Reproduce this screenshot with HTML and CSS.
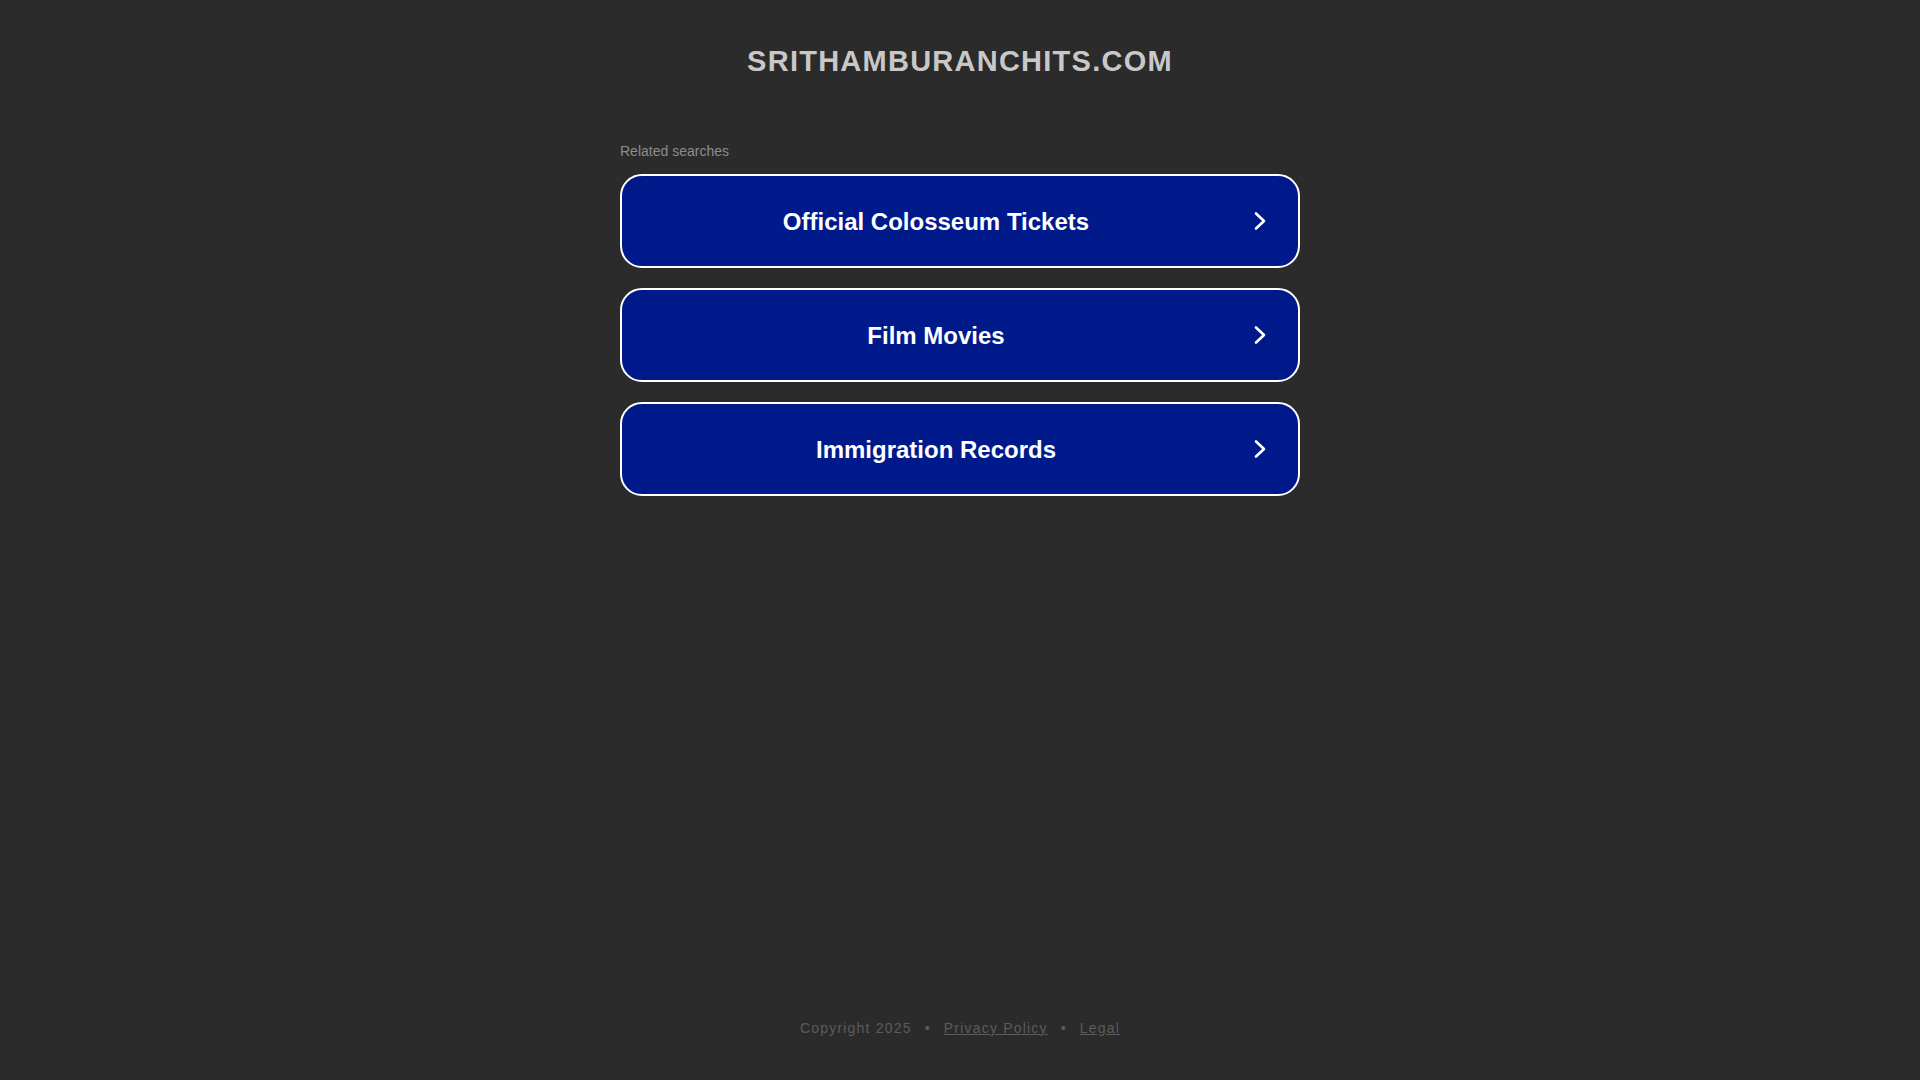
FILE: index.html
```html
<!DOCTYPE html>
<html lang="en">
<head>
<meta charset="utf-8">
<title>srithamburanchits.com</title>
<link rel="stylesheet" href="styles.css">
</head>
<body>
<div class="page">
  <header class="header">
    <h1 class="domain">SRITHAMBURANCHITS.COM</h1>
  </header>
  <main class="content">
    <div class="related">Related searches</div>
    <ul class="links">
      <li><a class="link" href="#"><span class="label">Official Colosseum Tickets</span><svg class="chev" viewBox="0 0 14 20" width="14" height="20"><path d="M3 2.5 L11 10 L3 17.5" fill="none" stroke="#fff" stroke-width="2.6" stroke-linecap="round" stroke-linejoin="round"/></svg></a></li>
      <li><a class="link" href="#"><span class="label">Film Movies</span><svg class="chev" viewBox="0 0 14 20" width="14" height="20"><path d="M3 2.5 L11 10 L3 17.5" fill="none" stroke="#fff" stroke-width="2.6" stroke-linecap="round" stroke-linejoin="round"/></svg></a></li>
      <li><a class="link" href="#"><span class="label">Immigration Records</span><svg class="chev" viewBox="0 0 14 20" width="14" height="20"><path d="M3 2.5 L11 10 L3 17.5" fill="none" stroke="#fff" stroke-width="2.6" stroke-linecap="round" stroke-linejoin="round"/></svg></a></li>
    </ul>
  </main>
  <footer class="footer">
    <span>Copyright 2025</span><span class="dot">•</span><a href="#">Privacy Policy</a><span class="dot">•</span><a href="#">Legal</a>
  </footer>
</div>
</body>
</html>
```

FILE: styles.css
```css
html, body {
  margin: 0;
  padding: 0;
  height: 100%;
}
body {
  background: #2b2b2b;
  font-family: Arial, "Liberation Sans", sans-serif;
}
.page {
  min-height: 100vh;
  display: flex;
  flex-direction: column;
  align-items: center;
}
.header {
  padding-top: 44px;
}
.domain {
  margin: 0;
  font-size: 29px;
  line-height: 34px;
  font-weight: bold;
  color: #c8c8c8;
  letter-spacing: 1.25px;
  text-align: center;
}
.content {
  width: 680px;
  margin-top: 65px;
}
.related {
  font-size: 14px;
  line-height: 16px;
  color: #8c8c8c;
  margin-bottom: 15px;
}
.links {
  list-style: none;
  margin: 0;
  padding: 0;
  display: flex;
  flex-direction: column;
  gap: 20px;
}
.link {
  display: flex;
  align-items: center;
  box-sizing: border-box;
  height: 94px;
  border: 2px solid #ffffff;
  border-radius: 22px;
  background: #011a8b;
  text-decoration: none;
  padding: 0 31px 0 0;
}
.label {
  flex: 1;
  text-align: center;
  color: #ffffff;
  font-size: 24px;
  font-weight: bold;
  padding-left: 1px;
  padding-top: 1px;
}
.chev {
  display: block;
  margin-left: 4px;
}
.footer {
  margin-top: auto;
  padding-bottom: 44px;
  font-size: 14px;
  letter-spacing: 1.2px;
  color: #5c5c5c;
  display: flex;
  align-items: center;
}
.footer a {
  color: #5c5c5c;
}
.dot {
  margin: 0 13px;
}
```
